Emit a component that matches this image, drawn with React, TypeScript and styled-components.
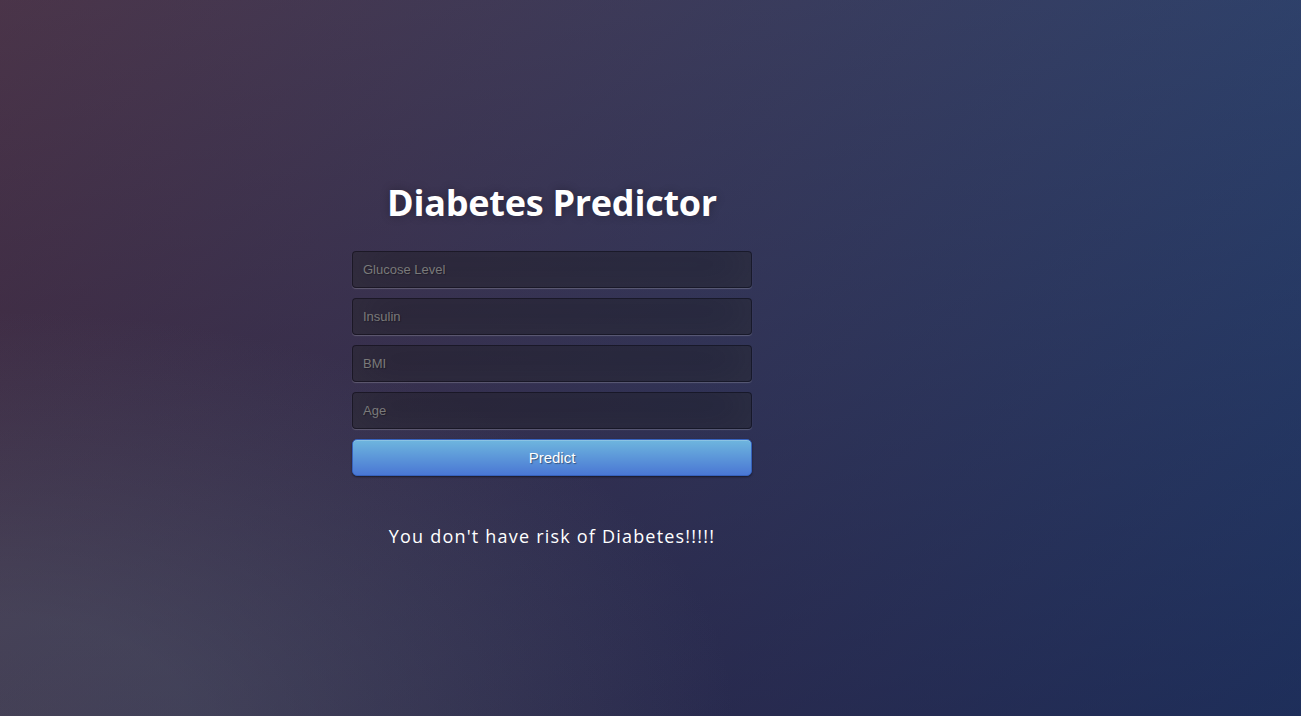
import React from "react";
import styled, { createGlobalStyle } from "styled-components";

const Global = createGlobalStyle`
  * { box-sizing: border-box; }
  html, body { margin: 0; height: 100%; }
  body {
    font-family: "Open Sans", sans-serif;
    background: #16255c;
    background:
      radial-gradient(ellipse farthest-corner at 0% 100%, rgba(104,128,138,.3) 10%, rgba(138,114,76,0) 40%),
      linear-gradient(to bottom, rgba(57,173,219,.25) 0%, rgba(42,60,87,.4) 100%),
      linear-gradient(135deg, #500c18 0%, #16255c 100%);
    background-attachment: fixed;
  }
  #root { height: 100%; }
`;

const Page = styled.div`
  height: 100%;
  padding: 180px 0 0 352px;
`;

const Login = styled.div`
  width: 400px;
  display: flex;
  flex-direction: column;
  align-items: stretch;
`;

const Title = styled.h1`
  margin: 0 0 25px;
  color: #fff;
  font-family: "Open Sans", sans-serif;
  font-weight: 700;
  font-size: 36px;
  line-height: 46px;
  letter-spacing: -0.25px;
  text-align: center;
  text-shadow: 0 0 10px rgba(0,0,0,0.3);
`;

const Form = styled.form`
  display: flex;
  flex-direction: column;
  gap: 10px;
  margin: 0;
`;

const Input = styled.input`
  width: 100%;
  margin: 0;
  background: rgba(0,0,0,0.3);
  outline: none;
  padding: 10px;
  font-family: "Liberation Sans", Arial, sans-serif;
  font-size: 13px;
  line-height: 15px;
  height: 37px;
  color: #fff;
  text-shadow: 1px 1px 1px rgba(0,0,0,0.3);
  border: 1px solid rgba(0,0,0,0.3);
  border-radius: 4px;
  box-shadow: inset 0 -5px 45px rgba(100,100,100,0.2), 0 1px 1px rgba(255,255,255,0.2);
  &::placeholder { color: #7a7a7a; }
`;

const Button = styled.button`
  display: block;
  width: 100%;
  height: 37px;
  padding: 9px 14px;
  font-family: "Liberation Sans", Arial, sans-serif;
  font-size: 15px;
  line-height: 17px;
  border-radius: 5px;
  color: #fff;
  background-color: #4a77d4;
  background-image: linear-gradient(to bottom, #6eb6de, #4a77d4);
  border: 1px solid #3762bc;
  text-shadow: 1px 1px 1px rgba(0,0,0,0.4);
  box-shadow: inset 0 1px 0 rgba(255,255,255,0.2), 0 1px 2px rgba(0,0,0,0.5);
  cursor: pointer;
`;

const Result = styled.p`
  margin: 48px 0 0;
  color: #fff;
  font-family: "Open Sans", sans-serif;
  font-size: 18px;
  font-weight: 500;
  line-height: 24px;
  letter-spacing: 1.2px;
  text-align: center;
`;

export default function App() {
  return (
    <>
      <Global />
      <Page>
        <Login>
          <Title>Diabetes Predictor</Title>
          <Form onSubmit={(e) => e.preventDefault()}>
            <Input type="text" placeholder="Glucose Level" />
            <Input type="text" placeholder="Insulin" />
            <Input type="text" placeholder="BMI" />
            <Input type="text" placeholder="Age" />
            <Button type="submit">Predict</Button>
          </Form>
          <Result>You don't have risk of Diabetes!!!!!</Result>
        </Login>
      </Page>
    </>
  );
}
